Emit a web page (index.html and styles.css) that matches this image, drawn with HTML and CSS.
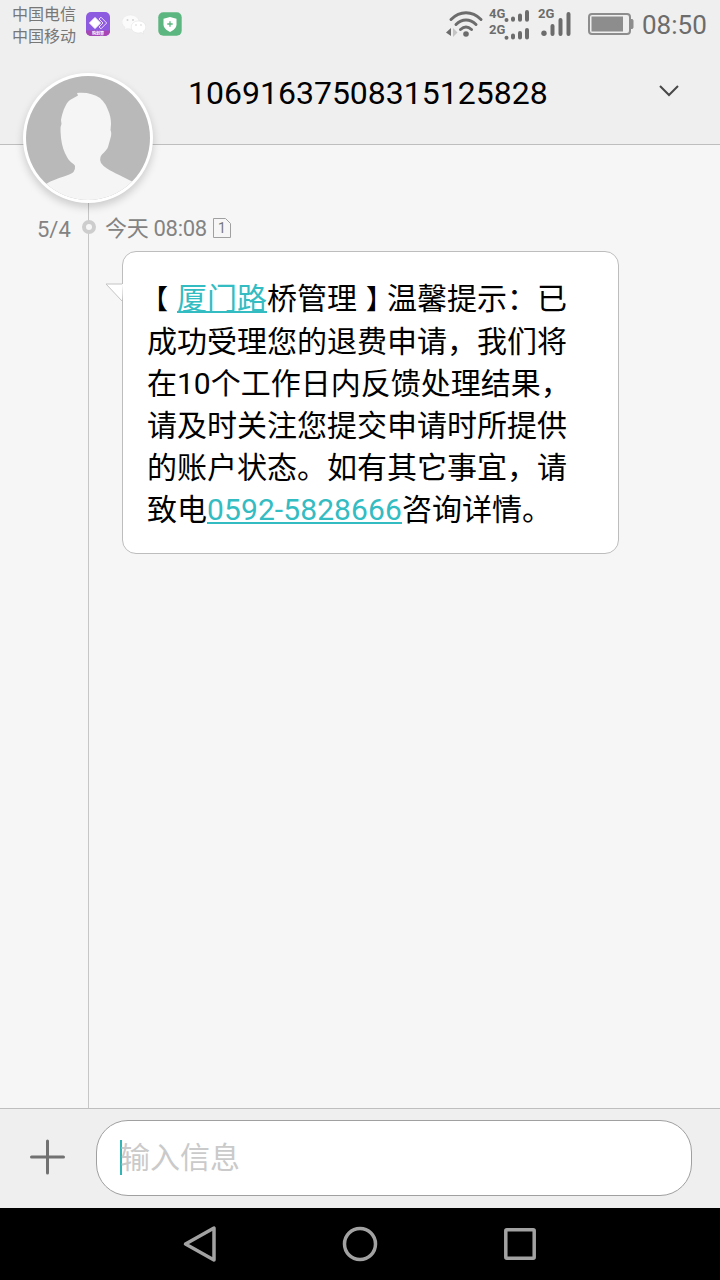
FILE: index.html
```html
<!DOCTYPE html>
<html lang="zh-CN">
<head>
    <meta charset="UTF-8" />
    <meta name="viewport" content="width=device-width, initial-scale=1.0" />
    <title>信息</title>
    <link rel="stylesheet" href="styles.css">
</head>
<body>
    <div class="phone">

        <div class="status-bar">
            <div class="carriers">
                <div>中国电信</div>
                <div>中国移动</div>
            </div>
            <div class="notifications">
                <svg width="24" height="24" viewBox="0 0 24 24">
                    <defs>
                        <clipPath id="app-clip"><rect width="24" height="24" rx="5" /></clipPath>
                    </defs>
                    <g clip-path="url(#app-clip)">
                        <rect width="24" height="24" fill="#8d5bdf" />
                        <rect y="18.5" width="24" height="6" fill="#a746b5" />
                    </g>
                    <path d="M9 5.500l5.500 5.500L9 16.500 3.500 11z" fill="#fff" stroke="#fff" stroke-width="1" stroke-linejoin="round" />
                    <path d="M13 7l2-1.800 5.700 5.800-5.700 5.800L13 15l4-4z" fill="none" stroke="#f0dcff" stroke-width="1" />
                    <text x="12" y="23.2" class="app-label">购划算</text>
                </svg>
                <svg width="24" height="24" viewBox="0 0 24 24">
                    <path d="M8.5 3C3.800 3 0 6 0 10c0 2.200 1.200 4 3 5.200L2.300 18l3-1.600c1 .3 2.100.5 3.200.5 4.700 0 8.500-3.100 8.500-6.900S13.200 3 8.500 3z" fill="#fbfbfb" stroke="#e4e4e4" stroke-width=".4" />
                    <path d="M16.500 9c-4.100 0-7.300 2.700-7.300 6s3.200 6 7.300 6c1 0 1.900-.2 2.700-.5l2.500 1.400-.6-2.300c1.700-1.100 2.700-2.700 2.700-4.600 0-3.300-3.200-6-7.300-6z" fill="#fff" stroke="#dedede" stroke-width=".5" />
                    <g fill="#d4d4d4">
                        <circle cx="5.500" cy="8" r="1" />
                        <circle cx="11" cy="8" r="1" />
                        <circle cx="14" cy="13" r=".8" />
                        <circle cx="19" cy="13" r=".8" />
                    </g>
                </svg>
                <svg width="24" height="24" viewBox="0 0 24 24">
                    <rect x=".3" y=".3" width="23.400" height="23.400" rx="5" fill="#5cb67f" />
                    <path d="M12 5l6.500 1.800v5.400c0 3.500-2.800 5.800-6.500 7.800-3.700-2-6.500-4.300-6.500-7.800V6.800z" fill="#fff" />
                    <path d="M12 9.300v5.400M9.300 12h5.400" stroke="#5cb67f" stroke-width="1.300" />
                </svg>
            </div>

            <svg class="wifi" width="38" height="28" viewBox="0 0 38 28">
                <g fill="none" stroke="#6c6c6c" stroke-width="3" stroke-linecap="round">
                    <path d="M5 8.500C14-.5 26-.5 35 8.500" />
                    <path d="M10 13.500c6-6 14-6 20 0" />
                    <path d="M14.500 18.500c3.500-3.200 7.500-3.200 11 0" />
                </g>
                <circle cx="20" cy="23" r="2.800" fill="#6c6c6c" />
                <path d="M0 21.500L5 17v8z" fill="#6c6c6c" />
                <path d="M7 17v9l4.500-4.500z" fill="#c4c4c4" />
            </svg>
            <svg class="signal-dual" width="42" height="34" viewBox="0 0 42 34">
                <text x="0" y="10.700" class="net-label">4G</text>
                <text x="0" y="26.700" class="net-label">2G</text>
                <g stroke="#6c6c6c" stroke-width="4" stroke-linecap="round">
                    <path d="M17.500 13v.01M24 12.700V11.500M31 12.700V8.500M38 12.700V5" />
                    <path d="M17.500 30.700v.01M24 30.500V28.500M31 30.500V26M38 30.500V23" />
                </g>
            </svg>
            <svg class="signal" width="34" height="32" viewBox="0 0 34 32">
                <text x="0" y="10.700" class="net-label">2G</text>
                <g stroke="#6c6c6c" stroke-width="4" stroke-linecap="round">
                    <path d="M14.500 27V19M22.500 27V13M30.500 27V7" />
                </g>
                <circle cx="6" cy="26.300" r="2.700" fill="#6c6c6c" />
            </svg>
            <svg class="battery" width="46" height="24" viewBox="0 0 46 24">
                <rect x="1" y="2" width="41" height="20" rx="3" fill="none" stroke="#8d8d8d" stroke-width="2" />
                <rect x="3.500" y="4.500" width="31.500" height="15" fill="#8d8d8d" />
                <path d="M43 7.500h1q1 0 1 1v7q0 1-1 1h-1z" fill="#8d8d8d" stroke="#8d8d8d" />
            </svg>
            <div class="clock">08:50</div>
        </div>

        <div class="header">
            <div class="avatar">
                <svg width="124" height="124" viewBox="0 0 124 124">
                    <defs>
                        <clipPath id="avatar-clip"><circle cx="62" cy="62" r="62" /></clipPath>
                    </defs>
                    <g clip-path="url(#avatar-clip)">
                        <rect width="124" height="124" fill="#b9b9b9" />
                        <path d="M51 17C60 16 68 18 74 22C77 25 80 28 82 34C84 38 85 43 85 48L84.500 54Q86 57 84.500 62L82 71C80 76 76 77 74.500 81Q73.500 84 75 87Q77 90 81 92.500C88 97 98 101 107 106V124H18V110C21 107 23 106 27 104.500C35 101 45 99 47.500 96Q49.500 93 49 90C48 87 44 87 41 81C38 76 36 70 35 62L34.500 55Q34 51 35.500 48L35 44C36 38 37 36 38 33C40 29 41 26 44 24L52 19.500Z" fill="#f5f5f5" />
                    </g>
                </svg>
            </div>
            <div class="title">10691637508315125828</div>
            <svg class="chevron" width="20" height="12" viewBox="0 0 20 12">
                <path d="M1 1l9 9 9-9" fill="none" stroke="#484848" stroke-width="2" />
            </svg>
        </div>

        <div class="thread">
            <div class="message-info">
                <span class="date">5/4</span>
                <span class="dot"></span>
                <span class="time">今天 08:08</span>
                <svg width="18" height="20" viewBox="0 0 18 20">
                    <path d="M.5 .5h12l5 5v14H.5z" fill="none" stroke="#a0a0a0" />
                    <text x="9" y="15" class="sim-label">1</text>
                </svg>
            </div>
            <div class="bubble">
                <svg class="tail" width="18" height="20" viewBox="0 0 18 20">
                    <path d="M18 1H1l16 17z" fill="#fff" />
                    <path d="M17 1H1l16 17" fill="none" stroke="#c4c4c4" />
                </svg>
                <span class="bracket-open">【</span><a class="link">厦门路</a>桥管理<span class="bracket-close">】</span>温馨提示：已<br>
                成功受理您的退费申请，我们将<br>
                在10个工作日内反馈处理结果，<br>
                请及时关注您提交申请时所提供<br>
                的账户状态。如有其它事宜，请<br>
                致电<a class="link phone-number">0592-5828666</a>咨询详情。
            </div>
        </div>

        <div class="composer">
            <svg class="plus" width="36" height="36" viewBox="0 0 36 36">
                <path d="M18.500 2v32M2.500 18h32" stroke="#717171" stroke-width="3" stroke-linecap="round" />
            </svg>
            <div class="input">
                <span class="caret"></span>
                <span class="placeholder">输入信息</span>
            </div>
        </div>

        <div class="nav-bar">
            <svg width="40" height="40" viewBox="0 0 40 40">
                <path d="M5.500 20L34 4v32z" fill="none" stroke="#a2a2a2" stroke-width="3.500" stroke-linejoin="round" />
            </svg>
            <svg width="40" height="40" viewBox="0 0 40 40">
                <circle cx="20" cy="20" r="15.500" fill="none" stroke="#a2a2a2" stroke-width="3.500" />
            </svg>
            <svg width="40" height="40" viewBox="0 0 40 40">
                <rect x="5.800" y="5.800" width="28.400" height="28.400" rx="1" fill="none" stroke="#a2a2a2" stroke-width="3.500" />
            </svg>
        </div>

    </div>
</body>
</html>
```

FILE: styles.css
```css
* {
    box-sizing: border-box;
}

body {
    margin: 0;
    font-family: Roboto, "Noto Sans CJK SC", sans-serif;
    background-color: #f6f6f6;
}

svg {
    display: block;
    flex: none;
}

.phone {
    display: flex;
    flex-direction: column;
    width: 720px;
    height: 1280px;
    overflow: hidden;
}

/* Status bar */
.status-bar {
    display: flex;
    align-items: center;
    height: 48px;
    padding: 0 12px;
    background-color: #efefef;
    color: #6c6c6c;
}

.carriers {
    width: 74px;
    font-size: 16px;
    line-height: 22px;
    color: #777;
    padding-top: 3px;
    white-space: nowrap;
}

.notifications {
    display: flex;
    gap: 12px;
    margin-right: auto;
}

.app-label {
    font-size: 4px;
    font-weight: bold;
    fill: #fff;
    text-anchor: middle;
}

.net-label {
    font-size: 13px;
    font-weight: bold;
    fill: #6c6c6c;
}

.wifi {
    margin: 2px 5px 0 0;
}

.signal-dual {
    margin: 0 7px 0 0;
}

.signal {
    margin: 0 16px 2px 0;
}

.battery {
    margin-right: 8px;
}

.clock {
    width: 66px;
    font-size: 26px;
    line-height: 48px;
    padding-top: 2px;
    white-space: nowrap;
}

/* Header */
.header {
    display: flex;
    align-items: flex-start;
    position: relative;
    height: 97px;
    padding: 0 41px 0 188px;
    background-color: #efefef;
    border-bottom: 1px solid #bebebe;
}

.title {
    flex: 1;
    padding-top: 26px;
    font-size: 32px;
    line-height: 38px;
    color: #000;
}

.chevron {
    margin-top: 37px;
}

/* The avatar hangs over the edge of the header */
.avatar {
    position: absolute;
    left: 23px;
    top: 25px;
    z-index: 1;
    padding: 3px;
    border-radius: 50%;
    background-color: #fff;
    box-shadow: 0 4px 8px rgba(0, 0, 0, 0.18);
}

/* Conversation */
.thread {
    flex: 1;
    padding-top: 68px;
    background: linear-gradient(#c6c6c6, #c6c6c6) 88px 0 / 1px 100% no-repeat #f6f6f6;
}

.message-info {
    display: flex;
    align-items: center;
    height: 30px;
    padding-left: 37px;
    font-size: 22px;
    line-height: 30px;
    color: #838383;
}

.date {
    width: 45px;
    padding-top: 3px;
}

.dot {
    width: 14px;
    height: 14px;
    margin: 0 9px 2px 0;
    border: 4px solid #cdcdcd;
    border-radius: 50%;
    background-color: #f6f6f6;
}

.time {
    width: 108px;
    padding-top: 2px;
    letter-spacing: -0.3px;
    white-space: nowrap;
}

.sim-label {
    font-size: 14px;
    fill: #777;
    text-anchor: middle;
}

.bubble {
    position: relative;
    width: 497px;
    height: 303px;
    margin: 8px 0 0 122px;
    padding: 26px 24px;
    border: 1px solid #bdbdbd;
    border-radius: 14px;
    background-color: #fff;
    font-size: 30px;
    line-height: 42px;
    color: #000;
    white-space: nowrap;
}

.tail {
    position: absolute;
    left: -18px;
    top: 31px;
}

.link {
    color: #33bcc2;
    text-decoration: underline;
    text-decoration-thickness: 2px;
    text-underline-offset: 2px;
}

.phone-number {
    letter-spacing: 0.1px;
}

.bracket-open,
.bracket-close {
    display: inline-block;
    width: 30px;
    font-size: 27px;
}

.bracket-open {
    text-indent: -6px;
}

.bracket-close {
    text-indent: 9px;
    letter-spacing: -6px;
}

/* Message input */
.composer {
    display: flex;
    align-items: center;
    height: 100px;
    padding: 0 28px 0 29px;
    border-top: 1px solid #bebebe;
    background-color: #efefef;
}

.plus {
    margin: 0 31px 4px 0;
}

.input {
    display: flex;
    align-items: center;
    flex: 1;
    height: 76px;
    margin-bottom: 1px;
    padding-left: 23px;
    border: 1px solid #a0a0a0;
    border-radius: 32px;
    background-color: #fff;
}

.caret {
    width: 2px;
    height: 35px;
    margin: 0 -2px 1px 0;
    background-color: #33b5b5;
}

.placeholder {
    font-size: 30px;
    line-height: 40px;
    color: #cacaca;
}

/* Navigation keys */
.nav-bar {
    display: flex;
    justify-content: center;
    align-items: center;
    gap: 120px;
    height: 72px;
    background-color: #000;
}
```
